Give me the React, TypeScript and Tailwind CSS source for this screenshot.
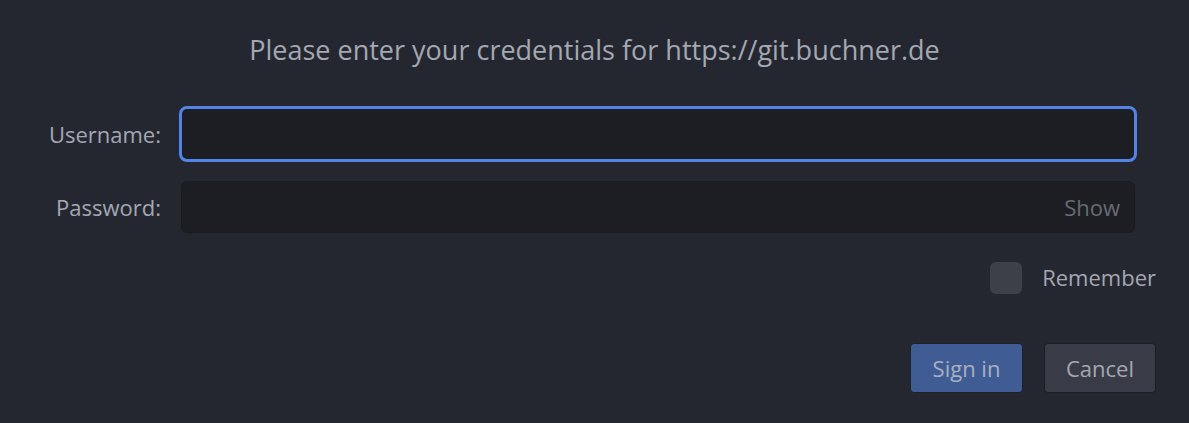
import React from "react";

// Credentials dialog
export default function App() {
  return (
    <div className="w-[1189px] h-[423px] bg-[#252730] font-['Open_Sans',sans-serif] text-[#a3a8b2] overflow-hidden">
      <h1 className="pt-[30px] text-center text-[27px] leading-[40px] text-[#a3a8b2]">
        Please enter your credentials for https://git.buchner.de
      </h1>

      <div className="mt-[38px] grid grid-cols-[161px_1fr] gap-x-[20px] gap-y-[21px] pr-[54px] items-center">
        <label className="text-right text-[22px]">Username:</label>
        <div className="h-[52px] rounded-[6px] bg-[#1d1e24] outline outline-[3px] outline-offset-[-1px] outline-[#5284e8]" />

        <label className="text-right text-[22px]">Password:</label>
        <div className="h-[52px] rounded-[6px] bg-[#1d1e24] border border-[#1a1b20] flex items-center justify-end pr-[14px]">
          <span className="text-[22px] text-[#676b74]">Show</span>
        </div>
      </div>

      <div className="mt-[28px] flex items-center justify-end pr-[33px] gap-[20px]">
        <div className="w-[32px] h-[32px] rounded-[6px] bg-[#3d4049]" />
        <span className="text-[22px]">Remember</span>
      </div>

      <div className="mt-[49px] flex justify-end pr-[33px] gap-[21px]">
        <button className="w-[113px] h-[50px] rounded-[4px] bg-[#3f5c95] border border-[#1e2028] text-[22px] text-[#a8b0c0]">
          Sign in
        </button>
        <button className="w-[112px] h-[50px] rounded-[4px] bg-[#393c47] border border-[#1c1d23] text-[22px] text-[#a3a8b2]">
          Cancel
        </button>
      </div>
    </div>
  );
}
